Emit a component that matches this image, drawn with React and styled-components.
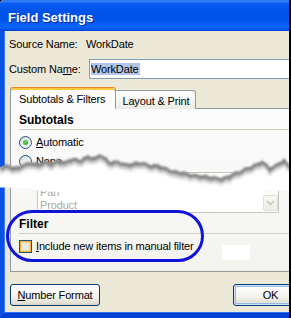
import React from "react";
import styled, { createGlobalStyle } from "styled-components";

const GlobalStyle = createGlobalStyle`
  html, body {
    margin: 0;
    padding: 0;
    background: #000;
  }
  body {
    font-family: "Liberation Sans", Arial, sans-serif;
    font-size: 11px;
    letter-spacing: -0.15px;
    color: #000;
  }
`;

const Window = styled.div`
  position: relative;
  box-sizing: border-box;
  width: 291px;
  height: 318px;
  border-right: 2px solid #000;
  border-top-left-radius: 4px;
  display: flex;
  flex-direction: column;
  overflow: hidden;
  background: #ece9d8;
`;

const TitleBar = styled.div`
  height: 31px;
  flex-shrink: 0;
  display: flex;
  align-items: center;
  padding: 3px 0 0 8px;
  box-sizing: border-box;
  background: linear-gradient(
    #1a5fd8 0px,
    #3d8fff 1px,
    #0a5cf4 3px,
    #0052e8 12px,
    #0054ea 20px,
    #0a66ff 27px,
    #0858f0 29px,
    #0040d0 31px
  );
  color: #fff;
  font-weight: bold;
  font-size: 13px;
  letter-spacing: 0;
  text-shadow: 1px 1px 0 #0a2a9c;
`;

const Body = styled.div`
  flex: 1;
  display: flex;
  flex-direction: column;
  border-left: 4px solid #0b52e4;
  border-bottom: 5px solid #0641d6;
  box-shadow: inset 1px 0 0 #3a7af0, inset 0 -1px 0 #2f6ff0;
  padding: 7px 0 0 5px;
`;

const InfoRow = styled.div`
  display: flex;
  align-items: center;
  height: ${(p) => p.$h || 13}px;
  margin-top: ${(p) => p.$mt || 0}px;
  line-height: 13px;
  white-space: nowrap;
`;

const Label = styled.span`
  width: ${(p) => p.$w}px;
  flex-shrink: 0;
`;

const TextBox = styled.div`
  box-sizing: border-box;
  width: 220px;
  height: 20px;
  flex-shrink: 0;
  border: 1px solid #7f9db9;
  background: #fff;
  padding-left: 1px;
  display: flex;
  align-items: center;
`;

const Selected = styled.span`
  background: #b2c6e9;
  line-height: 12px;
  padding: 0 1px 0 0;
`;

const TabRow = styled.div`
  display: flex;
  align-items: flex-end;
  height: 22px;
  margin: 8px 0 0 1px;
  position: relative;
  z-index: 1;
`;

const Tab = styled.div`
  box-sizing: border-box;
  height: ${(p) => (p.$active ? 22 : 19)}px;
  padding: ${(p) => (p.$active ? "1px 10px 0 8px" : "1px 6px 0 6px")};
  display: flex;
  align-items: center;
  white-space: nowrap;
  border: 1px solid #919b9c;
  border-bottom: none;
  border-radius: 3px 3px 0 0;
  ${(p) =>
    p.$active
      ? `
    border-top: 1px solid #e68b2c;
    box-shadow: inset 0 2px 0 #ffc73c;
    background: #fcfcfe;
  `
      : `
    border-left: none;
    border-radius: 0 3px 0 0;
    background: linear-gradient(#ffffff, #ecebe6);
  `}
`;

const Panel = styled.div`
  box-sizing: border-box;
  width: 300px;
  margin: -1px 0 0 1px;
  border: 1px solid #919b9c;
  background: linear-gradient(#fcfcfe, #f4f3ee);
  padding: 4px 0 18px 8px;
  display: flex;
  flex-direction: column;
`;

const SectionTitle = styled.div`
  font-weight: bold;
  font-size: 12px;
  letter-spacing: 0;
  line-height: 14px;
  margin-top: ${(p) => p.$mt || 0}px;
`;

const Rule = styled.div`
  height: 1px;
  margin-top: 2px;
  background: #d0d0bf;
`;

const OptionRow = styled.div`
  display: flex;
  align-items: center;
  gap: 4px;
  height: 13px;
  margin-top: 6px;
  line-height: 13px;
  white-space: nowrap;
`;

const Radio = styled.span`
  box-sizing: border-box;
  width: 13px;
  height: 13px;
  border-radius: 50%;
  border: 1px solid #1c5180;
  background: linear-gradient(135deg, #dcdcd5, #ffffff);
  display: grid;
  place-items: center;

  &::after {
    content: "";
    width: 5px;
    height: 5px;
    border-radius: 50%;
    background: radial-gradient(circle at 40% 40%, #62d862, #21a121);
    display: ${(p) => (p.$checked ? "block" : "none")};
  }
`;

const Check = styled.span`
  box-sizing: border-box;
  width: 13px;
  height: 13px;
  border: 1px solid #1c5180;
  background: #ebe9e0;
  box-shadow: inset 0 0 0 1px #f8b33a, inset 0 0 0 2px #fcd68a;
`;

const ListBox = styled.div`
  box-sizing: border-box;
  width: 242px;
  height: 41px;
  margin: 4px 0 0 18px;
  border: 1px solid #c9c7ba;
  background: #fff;
  display: flex;
`;

const ListItems = styled.div`
  flex: 1;
  display: flex;
  flex-direction: column;
  color: #aca899;
  padding-left: 2px;
`;

const ListItem = styled.div`
  height: 13px;
  line-height: 13px;
`;

const ScrollTrack = styled.div`
  width: 15px;
  display: flex;
  flex-direction: column;
  justify-content: flex-end;
  padding-bottom: 1px;
  background: #fbfbf8;
`;

const ScrollArrow = styled.div`
  box-sizing: border-box;
  height: 16px;
  border: 1px solid #e2e0d6;
  border-radius: 2px;
  background: linear-gradient(#f8f8f4, #eeede6);
  display: grid;
  place-items: center;
`;

const ButtonRow = styled.div`
  display: grid;
  grid-template-columns: 90px 75px;
  justify-content: space-between;
  width: 298px;
  margin: 12px 0 0 1px;
`;

const Button = styled.div`
  box-sizing: border-box;
  height: 22px;
  border: 1px solid #003c74;
  border-radius: 3px;
  background: linear-gradient(#ffffff, #f3f2ec 60%, #e3e0d4 90%, #d6d0c5);
  display: flex;
  align-items: center;
  justify-content: center;
  white-space: nowrap;
  ${(p) => p.$default && `box-shadow: inset 0 0 0 1px #cee7ff, inset 0 0 0 2px #98b8ea;`}
`;

const Callout = styled.div`
  position: absolute;
  left: 6px;
  top: 210px;
  width: 198px;
  height: 52px;
  box-sizing: border-box;
  border: 3px solid #1014d8;
  border-radius: 26px;
  pointer-events: none;
`;

const Patch = styled.div`
  position: absolute;
  left: 222px;
  top: 245px;
  width: 28px;
  height: 15px;
  background: #fff;
`;

const TearWrap = styled.svg`
  position: absolute;
  left: 0;
  top: 147px;
  width: 291px;
  height: 48px;
  pointer-events: none;
`;

// rough outline of the torn edge, in page coordinates
const outline = [
  [0, 167], [8, 165], [15, 168], [22, 165], [30, 162], [38, 164], [45, 161],
  [52, 163], [58, 160], [65, 162], [72, 158], [80, 160], [88, 156], [95, 158],
  [100, 154], [104, 157], [110, 162], [118, 161], [126, 164], [134, 163],
  [142, 162], [150, 165], [158, 165], [166, 168], [174, 171], [182, 172],
  [190, 174], [198, 175], [206, 176], [214, 177], [222, 178], [228, 176],
  [234, 173], [240, 171], [246, 168], [252, 166], [258, 163], [262, 161],
  [266, 164], [270, 168], [275, 165], [280, 162], [284, 160], [288, 164],
  [291, 166],
];

// densify with a small deterministic jitter so the edge looks ripped
const edge = [];
for (let i = 0; i < outline.length - 1; i++) {
  const [x0, y0] = outline[i];
  const [x1, y1] = outline[i + 1];
  for (let x = x0; x < x1; x += 2) {
    const t = (x - x0) / (x1 - x0);
    const n = Math.sin(x * 1.7) * 0.9 + Math.sin(x * 0.63 + 1) * 0.7;
    edge.push([x, y0 + (y1 - y0) * t + n]);
  }
}
edge.push([291, 166]);

const line = (dy) =>
  edge.map(([x, y]) => `${x},${(y - 147 + dy).toFixed(1)}`).join(" ");

const bottom = [
  [291, 190], [278, 190.5], [262, 190], [230, 189.5], [200, 190.5],
  [160, 189.5], [120, 190.5], [90, 191.5], [70, 192], [50, 191.5],
  [38, 190.5], [30, 188], [15, 187.5], [0, 187.5],
]
  .map(([x, y]) => `${x},${y - 147}`)
  .join(" ");

function Tear() {
  return (
    <TearWrap viewBox="0 0 291 48">
      <defs>
        <filter id="soft" x="-5%" y="-50%" width="110%" height="200%">
          <feGaussianBlur stdDeviation="0.9" />
        </filter>
      </defs>
      <polygon points={`${line(0)} ${bottom}`} fill="#fff" />
      <g filter="url(#soft)" fill="none" strokeLinejoin="round">
        <polyline points={line(6.5)} stroke="#ececec" strokeWidth="2" />
        <polyline points={line(4.5)} stroke="#c6c6c6" strokeWidth="2" />
        <polyline points={line(2.5)} stroke="#9a9a9a" strokeWidth="2" />
        <polyline points={line(0.8)} stroke="#767676" strokeWidth="2" />
      </g>
    </TearWrap>
  );
}

const U = styled.u`
  text-decoration: underline;
`;

export default function App() {
  return (
    <>
      <GlobalStyle />
      <Window>
        <TitleBar>Field Settings</TitleBar>
        <Body>
          <InfoRow>
            <Label $w={77}>Source Name:</Label>
            <span>WorkDate</span>
          </InfoRow>
          <InfoRow $h={20} $mt={8}>
            <Label $w={80}>
              Custom Na<U>m</U>e:
            </Label>
            <TextBox>
              <Selected>WorkDate</Selected>
            </TextBox>
          </InfoRow>

          <TabRow>
            <Tab $active>Subtotals &amp; Filters</Tab>
            <Tab>Layout &amp; Print</Tab>
          </TabRow>
          <Panel>
            <SectionTitle>Subtotals</SectionTitle>
            <Rule />
            <OptionRow>
              <Radio $checked />
              <span>
                <U>A</U>utomatic
              </span>
            </OptionRow>
            <OptionRow>
              <Radio />
              <span>
                N<U>o</U>ne
              </span>
            </OptionRow>
            <ListBox>
              <ListItems>
                <ListItem>Date</ListItem>
                <ListItem>Pan</ListItem>
                <ListItem>Product</ListItem>
              </ListItems>
              <ScrollTrack>
                <ScrollArrow>
                  <svg width="9" height="6" viewBox="0 0 9 6">
                    <polyline
                      points="1,1 4.5,4.5 8,1"
                      fill="none"
                      stroke="#c9c7bd"
                      strokeWidth="1.6"
                    />
                  </svg>
                </ScrollArrow>
              </ScrollTrack>
            </ListBox>

            <SectionTitle $mt={4}>Filter</SectionTitle>
            <Rule />
            <OptionRow>
              <Check />
              <span>
                <U>I</U>nclude new items in manual filter
              </span>
            </OptionRow>
          </Panel>

          <ButtonRow>
            <Button>
              <span>
                <U>N</U>umber Format
              </span>
            </Button>
            <Button $default>OK</Button>
          </ButtonRow>
        </Body>

        <Tear />
        <Callout />
        <Patch />
      </Window>
    </>
  );
}
